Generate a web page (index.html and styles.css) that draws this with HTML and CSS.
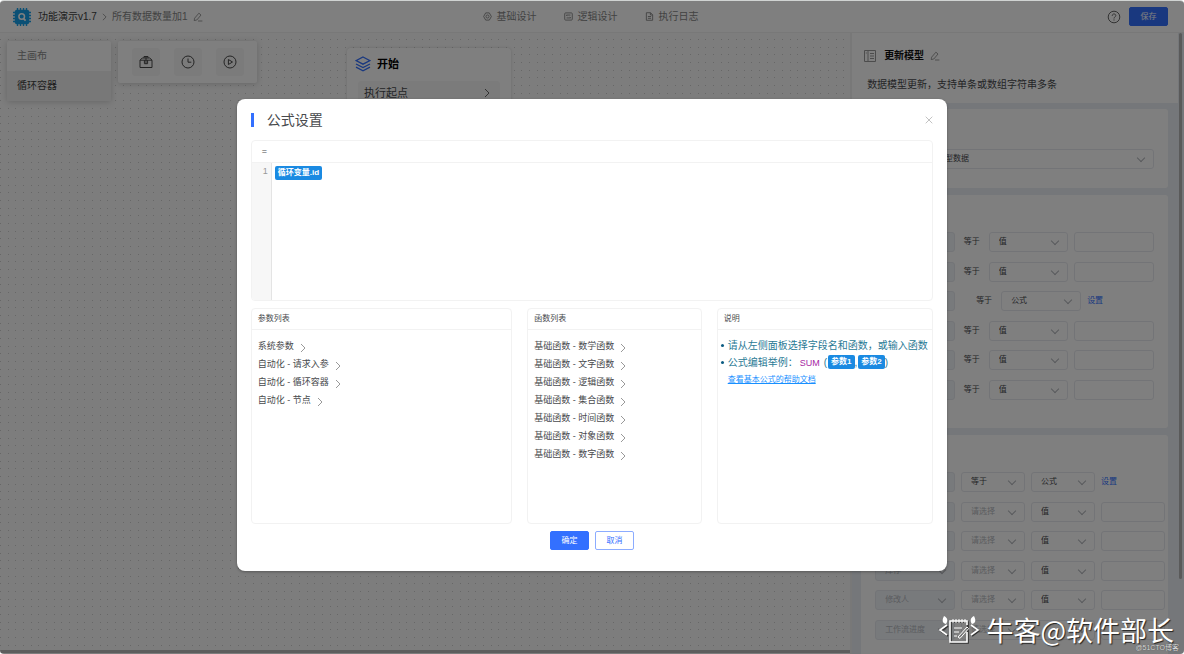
FILE: index.html
```html
<!DOCTYPE html>
<html lang="zh-CN">
<head>
<meta charset="utf-8">
<title>公式设置</title>
<meta name="viewport" content="width=device-width, initial-scale=1">
<link rel="stylesheet" href="styles.css">
</head>
<body>
<svg class="sprite" aria-hidden="true">
  <symbol id="pen" viewBox="0 0 10 10"><path d="M1.6 6.2 5.9 1.2 8 3 3.8 8 1.2 8.6zM5 9h4.4" fill="none" stroke="currentColor" stroke-width=".8"/></symbol>
  <symbol id="right" viewBox="0 0 6 10"><path d="M1 1l4 4-4 4" fill="none" stroke="currentColor"/></symbol>
</svg>
<div class="app">
  <header class="topbar">
    <nav class="crumbs">
      <svg class="logo" viewBox="0 0 18 18"><path d="M4.5 0v18M7.5 0v18M10.5 0v18M13.5 0v18M0 4.5h18M0 7.5h18M0 10.5h18M0 13.5h18" stroke="#17a0ea" stroke-width="1.4"/><rect x="1.8" y="1.8" width="14.4" height="14.4" rx="2" fill="#17a0ea"/><circle cx="8.7" cy="8.5" r="2.8" fill="none" stroke="#fff" stroke-width="1.5"/><path d="M10.6 10.6l2 2" stroke="#fff" stroke-width="1.7"/></svg>
      <a class="crumb-home" href="#">功能演示v1.7</a>
      <svg class="sep"><use href="#right"/></svg>
      <span>所有数据数量加1</span>
      <svg class="pen"><use href="#pen"/></svg>
    </nav>
    <nav class="tabs">
      <a href="#"><svg viewBox="0 0 10 10"><path d="M3 1h4l2.3 4L7 9H3L.7 5z"/><circle cx="5" cy="5" r="1.7"/></svg>基础设计</a>
      <a href="#"><svg viewBox="0 0 10 10"><rect x=".8" y="1" width="8.4" height="8" rx="1"/><path d="M2.6 3.4h4.6M2.6 3.4l1 1.2M7.4 6.6H2.8M7.4 6.6l-1-1.2"/></svg>逻辑设计</a>
      <a href="#"><svg viewBox="0 0 10 10"><path d="M1.5.8h4.7l2.3 2.3v6.1h-7zM6 .8v2.5h2.5M3.2 5h3.6M3.2 7h3.6"/></svg>执行日志</a>
    </nav>
    <div class="actions">
      <svg class="help" viewBox="0 0 14 14"><circle cx="7" cy="7" r="5.8"/><path d="M5.2 5.8C5.2 3.4 8.8 3.4 8.8 5.6 8.8 7 7 6.8 7 8.5M7 9.4v1.1"/></svg>
      <button class="btn primary" type="button">保存</button>
    </div>
  </header>
  <div class="workspace">
    <main class="canvas">
      <svg class="dots" aria-hidden="true"><defs><pattern id="grid" width="23" height="23" patternUnits="userSpaceOnUse"><path d="M0 6.5h1M8 6.5h1M15 6.5h1M0 14.5h1M8 14.5h1M15 14.5h1M0 21.5h1M8 21.5h1M15 21.5h1" stroke="#cfcfcf"/></pattern></defs><rect width="100%" height="100%" fill="url(#grid)"/></svg>
      <div class="floats">
        <nav class="tree"><a href="#">主画布</a><a class="current" href="#">循环容器</a></nav>
        <div class="tools">
          <button type="button" aria-label="组件"><svg viewBox="0 0 14 14"><path d="M1 5.2 3.2 3h7.6L13 5.2v7.3H1zM1 5.2h12M5.4 5.2v3.5h3.2V5.2M5 3V1.5h4V3M7 1.5v7.2"/></svg></button>
          <button type="button" aria-label="历史"><svg viewBox="0 0 14 14"><circle cx="7" cy="7" r="6"/><path d="M7 3.5v3.7h3.3"/></svg></button>
          <button type="button" aria-label="运行"><svg viewBox="0 0 14 14"><circle cx="7" cy="7" r="6"/><path d="M5.4 4.5v5L9.5 7z"/></svg></button>
        </div>
      </div>
      <section class="node">
        <h2><svg viewBox="0 0 16 16"><path d="M8 1l7 3.6-7 3.6-7-3.6zM1 8l7 3.6L15 8M1 11.2l7 3.6 7-3.6"/></svg>开始</h2>
        <div class="step"><span>执行起点</span><svg><use href="#right"/></svg></div>
      </section>
      <div class="hbar"></div>
    </main>
    <aside class="side">
      <div class="side-head">
        <h2><svg class="model" viewBox="0 0 12 12"><path d="M.5.5h11v11H.5zM4 .5v11M6 3.5h4M6 6h4M6 8.5h4M1.8 3h1"/></svg>更新模型<svg class="pen"><use href="#pen"/></svg></h2>
        <p>数据模型更新，支持单条或数组字符串多条</p>
      </div>
      <div class="cards">
        <section class="card source"><span class="sel"><select aria-label="模型"><option>模型数据</option></select></span></section>
        <section class="card conditions">
          <div class="rows">
            <div class="row"><span class="sel off"><select disabled aria-label="字段"></select></span><span class="op">等于</span><span class="sel"><select aria-label="类型"><option>值</option></select></span><input type="text" aria-label="值"></div>
            <div class="row"><span class="sel off"><select disabled aria-label="字段"></select></span><span class="op">等于</span><span class="sel"><select aria-label="类型"><option>值</option></select></span><input type="text" aria-label="值"></div>
            <div class="row formula"><span class="sel off"><select disabled aria-label="字段"></select></span><span class="op">等于</span><span class="sel"><select aria-label="类型"><option>公式</option></select></span><a href="#">设置</a></div>
            <div class="row"><span class="sel off"><select disabled aria-label="字段"></select></span><span class="op">等于</span><span class="sel"><select aria-label="类型"><option>值</option></select></span><input type="text" aria-label="值"></div>
            <div class="row"><span class="sel off"><select disabled aria-label="字段"></select></span><span class="op">等于</span><span class="sel"><select aria-label="类型"><option>值</option></select></span><input type="text" aria-label="值"></div>
            <div class="row"><span class="sel off"><select disabled aria-label="字段"></select></span><span class="op">等于</span><span class="sel"><select aria-label="类型"><option>值</option></select></span><input type="text" aria-label="值"></div>
          </div>
        </section>
        <section class="card updates">
          <div class="rows">
            <div class="row"><span class="sel off"><select disabled aria-label="字段"></select></span><span class="sel"><select aria-label="运算"><option>等于</option></select></span><span class="sel"><select aria-label="类型"><option>公式</option></select></span><a href="#">设置</a></div>
            <div class="row"><span class="sel off"><select disabled aria-label="字段"></select></span><span class="sel empty"><select aria-label="运算"><option>请选择</option></select></span><span class="sel"><select aria-label="类型"><option>值</option></select></span><input type="text" aria-label="值"></div>
            <div class="row"><span class="sel off"><select disabled aria-label="字段"></select></span><span class="sel empty"><select aria-label="运算"><option>请选择</option></select></span><span class="sel"><select aria-label="类型"><option>值</option></select></span><input type="text" aria-label="值"></div>
            <div class="row"><span class="sel off"><select disabled aria-label="字段"><option>库存</option></select></span><span class="sel empty"><select aria-label="运算"><option>请选择</option></select></span><span class="sel"><select aria-label="类型"><option>值</option></select></span><input type="text" aria-label="值"></div>
            <div class="row"><span class="sel off"><select disabled aria-label="字段"><option>修改人</option></select></span><span class="sel empty"><select aria-label="运算"><option>请选择</option></select></span><span class="sel"><select aria-label="类型"><option>值</option></select></span><input type="text" aria-label="值"></div>
            <div class="row"><span class="sel off"><select disabled aria-label="字段"><option>工作流进度</option></select></span><span class="sel empty"><select aria-label="运算"><option>请选择</option></select></span><span class="sel"><select aria-label="类型"></select></span><input type="text" aria-label="值"></div>
          </div>
        </section>
      </div>
      <div class="vbar"></div>
    </aside>
  </div>
  <div class="mask">
    <div class="dialog" role="dialog" aria-labelledby="dlg-title">
      <div class="dialog-head">
        <h1 id="dlg-title">公式设置</h1>
        <button class="close" type="button" aria-label="关闭"><svg viewBox="0 0 8 8"><path d="M.7.7l6.6 6.6M7.3.7.7 7.3"/></svg></button>
      </div>
      <div class="editor">
        <div class="editor-head">=</div>
        <div class="code"><div class="gutter">1</div><div class="line"><span class="tag">循环变量.id</span></div></div>
      </div>
      <div class="panels">
        <section class="panel">
          <h3>参数列表</h3>
          <ul class="list">
            <li>系统参数<svg><use href="#right"/></svg></li>
            <li>自动化 - 请求入参<svg><use href="#right"/></svg></li>
            <li>自动化 - 循环容器<svg><use href="#right"/></svg></li>
            <li>自动化 - 节点<svg><use href="#right"/></svg></li>
          </ul>
        </section>
        <section class="panel">
          <h3>函数列表</h3>
          <ul class="list">
            <li>基础函数 - 数学函数<svg><use href="#right"/></svg></li>
            <li>基础函数 - 文字函数<svg><use href="#right"/></svg></li>
            <li>基础函数 - 逻辑函数<svg><use href="#right"/></svg></li>
            <li>基础函数 - 集合函数<svg><use href="#right"/></svg></li>
            <li>基础函数 - 时间函数<svg><use href="#right"/></svg></li>
            <li>基础函数 - 对象函数<svg><use href="#right"/></svg></li>
            <li>基础函数 - 数字函数<svg><use href="#right"/></svg></li>
          </ul>
        </section>
        <section class="panel">
          <h3>说明</h3>
          <ul class="notes">
            <li>请从左侧面板选择字段名和函数，或输入函数</li>
            <li>公式编辑举例：<span class="fn">SUM</span><span class="paren">(</span><span class="tag">参数1</span><span class="comma">,</span><span class="tag">参数2</span>)</li>
          </ul>
          <a class="doc" href="#">查看基本公式的帮助文档</a>
        </section>
      </div>
      <div class="dialog-foot">
        <button class="btn primary" type="button">确定</button>
        <button class="btn" type="button">取消</button>
      </div>
    </div>
  </div>
  <div class="mark">
    <svg viewBox="0 0 42 30"><g fill="none" stroke="#333" stroke-width="1.7" transform="translate(1 1)"><path d="M9 10 2 15l7 5M33 10l7 5-7 5"/><path d="M12 6h17v21H12z"/></g><g fill="none" stroke="#fff" stroke-width="1.6"><path d="M9 10 2 15l7 5M33 10l7 5-7 5M29 17v10H12V6h17v4"/><path d="M15 4v4M18 4v4M21 4v4M24 4v4M27 4v4M16 13h8M16 17h5M16 21h3" stroke-width="1"/><path d="M20 22l9-10 1.6 1.6L22 23.4z" stroke-width="1"/></g><path d="M6 1c4 2 4 5 2 8-4-1-4-4-2-8zM36 1c-4 2-4 5-2 8 4-1 4-4 2-8z" fill="#fff"/></svg>
    <span>牛客@软件部长</span>
  </div>
  <small class="credit">@51CTO博客</small>
</div>
</body>
</html>
```
FILE: styles.css
```css
* { box-sizing: border-box; }
body {
  margin: 0;
  background: #fff;
  font: 10px/16px "Liberation Sans", "Noto Sans CJK SC", sans-serif;
  color: #484a4d;
}
h1, h2, h3, p, ul { margin: 0; padding: 0; }
ul { list-style: none; }
a { color: inherit; text-decoration: none; }
button, select, input { font: inherit; color: inherit; margin: 0; }
svg { display: block; flex: none; }
.sprite { position: absolute; width: 0; height: 0; }

.app {
  position: relative;
  display: flex;
  flex-direction: column;
  height: 100vh;
  border-top: 1px solid #d0d3d2;
  border-radius: 4px;
  overflow: hidden;
  background: #fff;
}

/* top bar */
.topbar {
  display: grid;
  grid-template-columns: 1fr auto 1fr;
  align-items: center;
  height: 32px;
  padding: 0 16px 0 13px;
  border-bottom: 1px solid #f0f0f0;
  color: #858585;
}
.crumbs, .tabs, .actions, .tabs a { display: flex; align-items: center; }
.logo { width: 18px; height: 18px; margin-right: 7px; }
.crumb-home { color: #404040; }
.sep { width: 5px; height: 8px; margin: 0 5px; }
.pen { width: 10px; height: 10px; margin-left: 6px; color: #858585; }
.tabs { gap: 27px; }
.tabs a { gap: 5px; }
.tabs svg { width: 9px; height: 9px; fill: none; stroke: #858585; }
.actions { justify-content: flex-end; gap: 8px; }
.help { width: 14px; height: 14px; fill: none; stroke: #666; }
.btn {
  width: 39px;
  height: 19px;
  padding: 0;
  border: 1px solid #8cacff;
  border-radius: 2px;
  background: #fff;
  color: #3370ff;
  font-size: 8px;
  line-height: 16px;
}
.btn.primary { background: #3370ff; border-color: #3370ff; color: #fff; }

/* canvas */
.workspace { display: flex; flex: 1; min-height: 0; }
.canvas { position: relative; flex: 1; background: #fafafa; }
.dots { position: absolute; width: 100%; height: 100%; }
.floats { position: relative; display: flex; align-items: flex-start; gap: 7px; padding: 8px 7px; }
.tree, .tools, .node { background: #fff; border-radius: 2px; box-shadow: 0 1px 6px rgba(0, 0, 0, .18); }
.tree { width: 104px; color: #8a8a8a; }
.tree a { display: block; padding: 7px 10px; }
.tree .current { background: #f1f1f1; color: #404040; }
.tools { display: flex; gap: 14px; padding: 7px 13px 7px 14px; }
.tools button { display: grid; place-items: center; width: 28px; height: 28px; padding: 0; border: 0; border-radius: 3px; background: #f7f7f7; }
.tools svg { width: 14px; height: 14px; fill: none; stroke: #484848; }
.node { position: absolute; left: 347px; top: 15px; width: 164px; padding: 7px 11px 11px; border-radius: 4px; box-shadow: 0 0 3px rgba(0, 0, 0, .15); }
.node h2 { display: flex; align-items: center; gap: 6px; margin-left: -3px; font-size: 11px; line-height: 18px; color: #000; }
.node h2 svg { width: 16px; height: 16px; fill: none; stroke: #3370ff; stroke-width: 1.3; }
.step { display: flex; justify-content: space-between; align-items: center; height: 24px; margin-top: 8px; padding: 0 10px 0 6px; border-radius: 3px; background: #f7f7f7; font-size: 11px; }
.step svg { width: 6px; height: 10px; color: #666; }
.hbar { position: absolute; left: 0; right: 0; bottom: 1px; height: 3px; background: #bbb; }

/* settings column */
.side { position: relative; display: flex; flex-direction: column; width: 28.2%; border-left: 2px solid #f0f0f0; background: #ebeff4; }
.side-head { margin-right: 6px; padding: 15px 15px 10px; background: #fff; }
.side-head h2 { display: flex; align-items: center; font-size: 10px; line-height: 16px; color: #111; margin-left: -3px; }
.side-head p { padding-top: 13px; }
.model { width: 12px; height: 12px; margin-right: 8px; fill: none; stroke: #999; }
.cards { display: flex; flex-direction: column; gap: 7px; flex: 1; min-height: 0; overflow: hidden; padding: 6px 16px 0 9px; font-size: 8px; }
.card { flex: none; background: #fff; border-radius: 3px; }
.source { padding: 40px 14px 19px 66px; }
.conditions { padding: 37px 14px 28px; }
.updates { padding: 37px 3px 28px 14px; }
.rows { display: flex; flex-direction: column; justify-content: space-between; min-height: 168px; }
.row { display: grid; align-items: center; }
.conditions .row { grid-template-columns: 1fr 34px 1fr 6px 1fr; }
.conditions .row > :last-child { grid-column: 5; }
.conditions .formula { grid-template-columns: 80px 46px 80px 6px 1fr; }
.updates .row { grid-template-columns: 5fr 4fr 4fr 4fr; column-gap: 6px; }
.op { text-align: center; }
.formula .op { padding-left: 12px; }
.row a { color: #3370ff; }
.sel { position: relative; display: block; min-width: 0; }
.sel select, .row input {
  appearance: none;
  display: block;
  width: 100%;
  min-width: 0;
  height: 20px;
  padding: 0 9px;
  border: 1px solid #e6e9ee;
  border-radius: 3px;
  background: #fff;
  opacity: 1;
}
.sel::after {
  content: "";
  position: absolute;
  right: 10px;
  top: 6px;
  width: 5px;
  height: 5px;
  border: solid #b2b5bb;
  border-width: 0 1px 1px 0;
  transform: rotate(45deg);
}
.off select { background: #f1f4f8; color: #b6b9c0; }
.empty select { color: #b6b9c0; }
.vbar { position: absolute; right: 2px; top: 0; width: 3px; height: 88%; border-radius: 2px; background: #b4b4b4; }

/* dialog */
.mask { position: absolute; inset: 0; background: rgba(0, 0, 0, .5); }
.dialog {
  width: 60%;
  margin: 15vh auto 0;
  padding: 14px 14px 21px;
  border-radius: 8px;
  background: #fff;
  box-shadow: 0 1px 3px rgba(0, 0, 0, .3);
}
.dialog-head { display: flex; align-items: center; justify-content: space-between; height: 14px; margin-bottom: 13px; }
.dialog-head h1 { padding-left: 13px; border-left: 3px solid #3370ff; font-size: 14px; line-height: 14px; font-weight: 400; }
.close { padding: 0; border: 0; background: none; }
.close svg { width: 8px; height: 8px; fill: none; stroke: #bbb; stroke-width: .9; }
.editor, .panel { border: 1px solid #f2f2f2; border-radius: 4px; overflow: hidden; }
.editor-head { height: 22px; padding: 0 10px; border-bottom: 1px solid #f2f2f2; font-size: 9px; line-height: 21px; }
.code { display: flex; height: 137px; }
.gutter { width: 20px; padding-right: 3px; border-right: 1px solid #e4e4e4; background: #f7f7f7; color: #999; font-size: 9px; text-align: right; }
.line { padding: 3px; }
.tag { display: inline-block; padding: 0 3px; border-radius: 2px; background: #1a8ae2; color: #fff; font-size: 8px; line-height: 14px; vertical-align: top; font-weight: 700; }
.panels { display: grid; grid-template-columns: 262fr 175fr 217fr; gap: 15px; margin-top: 7px; }
.panel { height: 216px; }
.panel h3 { height: 21px; padding-left: 6px; border-bottom: 1px solid #f2f2f2; font-size: 8px; line-height: 20px; font-weight: 400; }
.list { padding: 7px 6px 0; font-size: 9px; line-height: 18px; }
.list li { display: flex; align-items: center; gap: 6px; }
.list svg { width: 6px; height: 10px; margin-top: 3px; color: #999; }
.notes { padding: 7px 0 0 10px; color: #2a7a95; line-height: 17px; white-space: nowrap; }
.notes li { position: relative; }
.notes li::before { content: ""; position: absolute; left: -7px; top: 7px; width: 3px; height: 3px; border-radius: 50%; background: #0b5b82; }
.notes .tag { margin-top: 1px; }
.fn { color: #a626a4; font-size: 9px; margin: 0 4px 0 2px; }
.paren, .comma { margin-right: 1px; }
.doc { display: block; padding-left: 10px; color: #1890ff; font-size: 8px; text-decoration: underline; }
.dialog-foot { display: flex; justify-content: center; gap: 6px; margin-top: 7px; }

/* watermark */
.mark { position: absolute; right: 10px; bottom: 8px; display: flex; align-items: center; gap: 6px; color: #fff; font: 400 27px/32px "Noto Sans CJK SC", sans-serif; text-shadow: 1px 1px 1px #222; }
.mark svg { width: 42px; height: 30px; }
.credit { position: absolute; right: 5px; bottom: 1px; color: #ddd; font-size: 7px; line-height: 10px; text-shadow: 0 0 1px #333; }
```
